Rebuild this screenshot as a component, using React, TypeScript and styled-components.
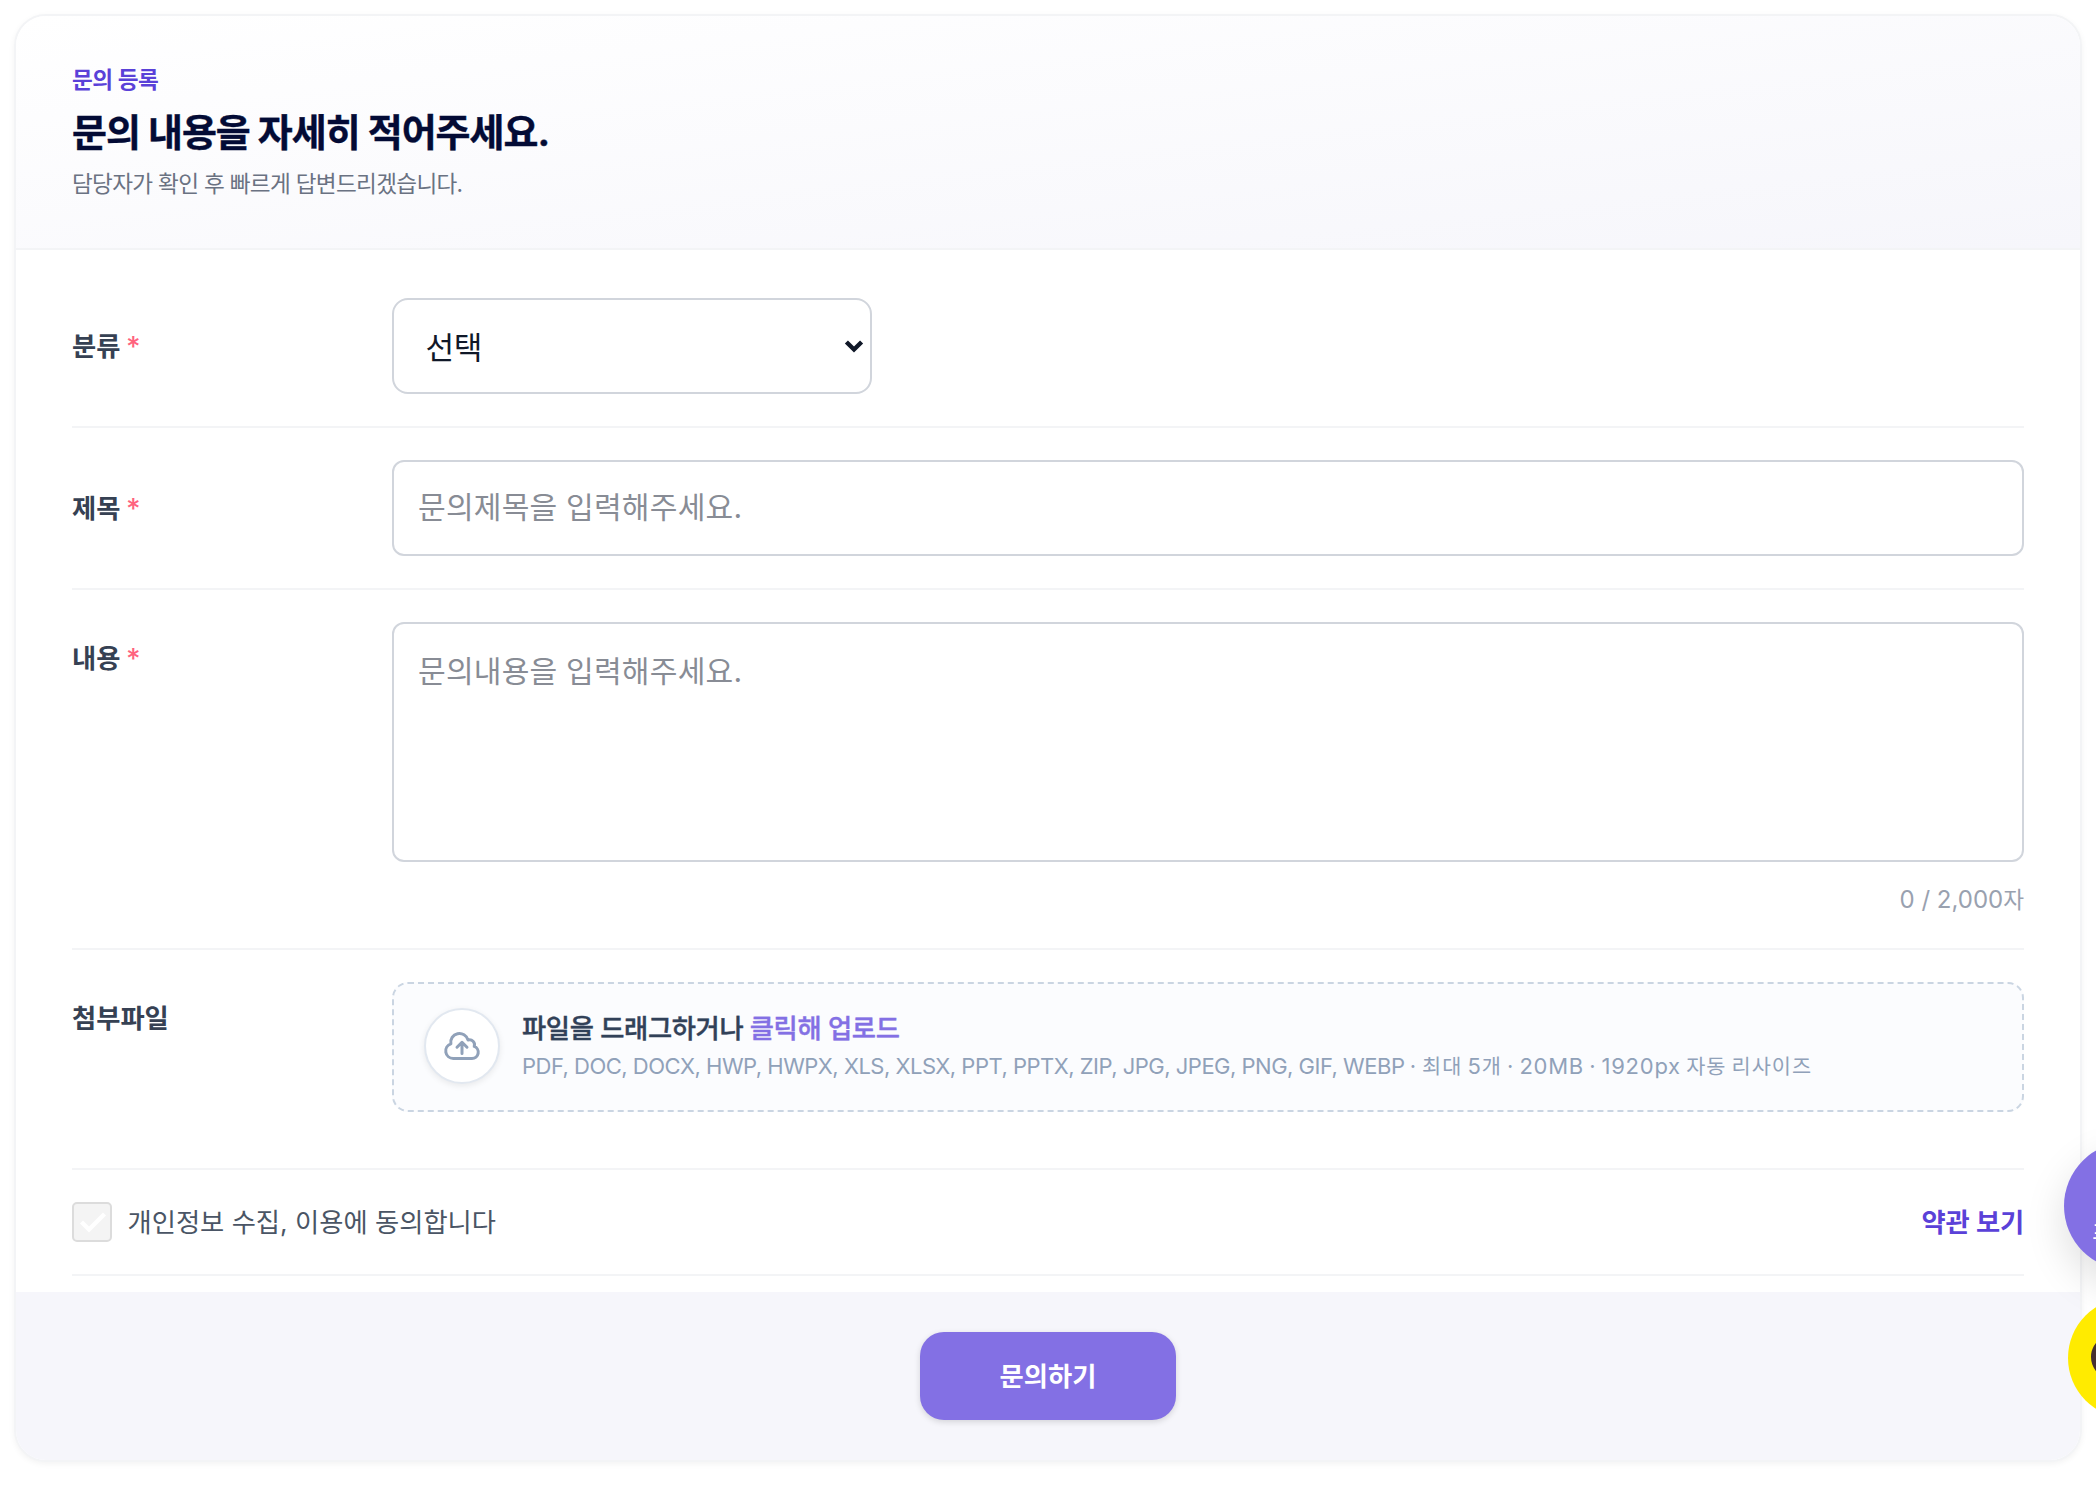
import React, { useState } from 'react';
import styled, { createGlobalStyle } from 'styled-components';

const sans = `Inter, "Noto Sans CJK KR", sans-serif`;

const color = {
  primary: '#8370e4',
  primaryDeep: '#5a41d8',
  heading: '#030b35',
  label: '#364153',
  body: '#4a5565',
  muted: '#6a7282',
  faint: '#99a1af',
  placeholder: '#888c95',
  line: '#f3f4f6',
  field: '#d1d5dc',
  slate: '#90a1b9',
  panel: '#f6f6fb',
};

const GlobalStyle = createGlobalStyle`
  * { box-sizing: border-box; }
  html, body { margin: 0; padding: 0; overflow: hidden; background: #fff; }
  body { font-family: ${sans}; -webkit-font-smoothing: antialiased; }
  button, input, textarea { font-family: inherit; margin: 0; }
`;

const Page = styled.main`
  min-height: 1506px;
  padding: 14px;
`;

const Card = styled.form`
  display: flex;
  flex-direction: column;
  border: 2px solid ${color.line};
  border-radius: 32px;
  background: #fff;
  overflow: hidden;
  box-shadow: 0 2px 6px rgba(0, 0, 0, 0.05);
`;

const Header = styled.header`
  display: flex;
  flex-direction: column;
  gap: 8px;
  height: 234px;
  padding: 48px 56px 0;
  border-bottom: 2px solid ${color.line};
  background: linear-gradient(to bottom right, #fff, ${color.panel});
`;

const Eyebrow = styled.p`
  margin: 0;
  font-size: 22.6px;
  line-height: 32px;
  font-weight: 600;
  letter-spacing: -0.5px;
  color: ${color.primaryDeep};
`;

const Title = styled.h1`
  margin: 0;
  padding-top: 1px;
  font-size: 38px;
  line-height: 55px;
  font-weight: 700;
  letter-spacing: -1px;
  color: ${color.heading};
  -webkit-text-stroke: 0.4px currentColor;
`;

const Lead = styled.p`
  margin: 0;
  font-size: 22.6px;
  line-height: 32px;
  letter-spacing: -0.68px;
  color: ${color.muted};
`;

const Body = styled.div`
  display: flex;
  flex-direction: column;
  padding: 16px 56px;
`;

const Row = styled.div<{ $top?: boolean; $last?: boolean }>`
  display: grid;
  grid-template-columns: 320px 1fr;
  align-items: ${(p) => (p.$top ? 'start' : 'center')};
  padding: 32px 0;
  border-bottom: ${(p) => (p.$last ? 'none' : `2px solid ${color.line}`)};
`;

const Label = styled.label<{ $top?: boolean }>`
  display: flex;
  gap: 5.5px;
  padding-top: ${(p) => (p.$top ? '17px' : '2px')};
  font-size: 26.3px;
  line-height: 40px;
  font-weight: 600;
  color: ${color.label};
`;

const Required = styled.span`
  font-size: 28px;
  font-weight: 500;
  color: #ff637e;
`;

const SelectBox = styled.button`
  display: flex;
  align-items: center;
  justify-content: space-between;
  width: 480px;
  height: 96px;
  padding: 0 6px 0 31.5px;
  border: 2px solid ${color.field};
  border-radius: 16px;
  background: #fff;
  font-size: 31.2px;
  color: #101828;
`;

const SelectValue = styled.span`
  padding-bottom: 2px;
  letter-spacing: -0.4px;
`;

const Input = styled.input`
  width: 100%;
  height: 96px;
  padding: 0 24px 2px;
  border: 2px solid ${color.field};
  border-radius: 12px;
  background: #fff;
  font-size: 30.1px;
  letter-spacing: 0.2px;
  outline: none;
  &::placeholder { color: ${color.placeholder}; opacity: 1; }
`;

const TextArea = styled.textarea`
  display: block;
  width: 100%;
  height: 240px;
  padding: 23px 24px;
  border: 2px solid ${color.field};
  border-radius: 12px;
  background: #fff;
  font-size: 30.1px;
  line-height: 48px;
  letter-spacing: 0.2px;
  resize: none;
  outline: none;
  &::placeholder { color: ${color.placeholder}; opacity: 1; }
`;

const Counter = styled.div`
  margin-top: 22px;
  text-align: right;
  font-size: 24px;
  line-height: 32px;
  color: ${color.faint};
`;

const Unit = styled.span`
  font-size: 22.6px;
`;

const DropZone = styled.div`
  display: flex;
  align-items: flex-start;
  gap: 22px;
  height: 130px;
  padding: 24px 30px;
  border: 2px dashed #cad5e2;
  border-radius: 16px;
  background: #fbfcfe;
`;

const UploadBadge = styled.span`
  display: flex;
  align-items: center;
  justify-content: center;
  flex: none;
  width: 76px;
  height: 76px;
  border: 2px solid #e2e8f0;
  border-radius: 50%;
  background: #fff;
  color: ${color.slate};
  box-shadow: 0 2px 6px rgba(0, 0, 0, 0.08);
`;

const DropText = styled.div`
  display: flex;
  flex-direction: column;
  white-space: nowrap;
`;

const DropTitle = styled.p`
  display: flex;
  gap: 6.500px;
  margin: 0;
  padding-top: 1px;
  font-size: 26.3px;
  line-height: 39px;
  font-weight: 500;
  letter-spacing: -0.35px;
  color: #314158;
  -webkit-text-stroke: 0.4px currentColor;
`;

const Accent = styled.span`
  color: ${color.primary};
`;

const DropHint = styled.p`
  margin: 0;
  font-size: 22px;
  line-height: 36px;
  letter-spacing: 0.75px;
  word-spacing: -1.7px;
  color: ${color.slate};
`;

const Formats = styled.span`
  letter-spacing: -0.5px;
  word-spacing: 0;
`;

const Ko = styled.span`
  font-size: 20.8px;
  letter-spacing: 1px;
`;

const Consent = styled.div`
  display: flex;
  align-items: center;
  justify-content: space-between;
  height: 108px;
  margin-top: 24px;
  border-top: 2px solid ${color.line};
  border-bottom: 2px solid ${color.line};
`;

const ConsentLabel = styled.div`
  display: flex;
  align-items: center;
  gap: 15.5px;
`;

const ConsentText = styled.span`
  padding-top: 2px;
  font-size: 26.3px;
  line-height: 40px;
  color: ${color.body};
`;

const CheckBox = styled.button`
  display: flex;
  align-items: center;
  justify-content: center;
  width: 40px;
  height: 40px;
  padding: 0;
  border: 2px solid #dcdcdc;
  border-radius: 5px;
  background: #f4f4f4;
  color: #fff;
`;

const TermsLink = styled.a`
  padding-top: 2px;
  font-size: 26.3px;
  line-height: 40px;
  font-weight: 600;
  letter-spacing: -0.2px;
  color: ${color.primaryDeep};
`;

const Footer = styled.footer`
  display: flex;
  justify-content: center;
  height: 168px;
  padding: 40px 0;
  background: ${color.panel};
`;

const Submit = styled.button`
  width: 256px;
  height: 88px;
  padding: 0 0 3px;
  border: 0;
  border-radius: 24px;
  background: ${color.primary};
  color: #fff;
  font-size: 26.3px;
  font-weight: 600;
  letter-spacing: 0.1px;
  box-shadow: 0 2px 6px rgba(0, 0, 0, 0.14);
`;

const FloatingMenu = styled.aside`
  position: fixed;
  top: 1142px;
  left: 2064px;
  display: flex;
  flex-direction: column;
  align-items: center;
  gap: 28px;
  width: 128px;
`;

const FloatingButton = styled.button<{ $size: number; $bg: string; $shadow?: boolean }>`
  display: flex;
  align-items: center;
  justify-content: center;
  flex: none;
  width: ${(p) => p.$size}px;
  height: ${(p) => p.$size}px;
  padding: 0;
  border: 0;
  border-radius: 50%;
  background: ${(p) => p.$bg};
  color: #fff;
  box-shadow: ${(p) => (p.$shadow ? '0 16px 40px rgba(0, 0, 0, 0.13)' : 'none')};
`;

const FloatingText = styled.span`
  padding-top: 54px;
  font-size: 20px;
  line-height: 28px;
  font-weight: 500;
  letter-spacing: -0.6px;
  white-space: nowrap;
`;

const ChevronIcon = () => (
  <svg width="20" height="14" viewBox="0 0 20 14" fill="none" stroke="#101828" strokeWidth="4.4">
    <path d="M2.4 3 10 10.5 17.6 3" />
  </svg>
);

const CloudUploadIcon = () => (
  <svg width="40" height="40" viewBox="0 0 24 24" fill="none" stroke="currentColor" strokeWidth="1.8" strokeLinecap="round" strokeLinejoin="round">
    <path d="M12 16.5V9.75m0 0l3 3m-3-3l-3 3M6.75 19.5a4.5 4.5 0 01-1.41-8.775 5.25 5.25 0 0110.233-2.33 3 3 0 013.758 3.848A3.752 3.752 0 0118 19.5H6.75z" />
  </svg>
);

const CheckIcon = () => (
  <svg width="36" height="36" viewBox="0 0 36 36" fill="none" stroke="currentColor" strokeWidth="4.4">
    <path d="M7.500 18 15 25.500 30.500 10" />
  </svg>
);

const TalkIcon = () => (
  <svg width="74" height="74" viewBox="0 0 74 74" fill="#46302f">
    <path d="M37 8C16.6 8 0 20.500 0 36c0 10 6.800 18.700 17 23.700L13.500 72 28 62.900c2.900.5 5.900.7 9 .7 20.400 0 37-12.100 37-27.600S57.400 8 37 8z" />
  </svg>
);

function FieldLabel({ text, required, top }: { text: string; required?: boolean; top?: boolean }) {
  return (
    <Label $top={top}>
      {text}
      {required && <Required>*</Required>}
    </Label>
  );
}

export default function App() {
  const [subject, setSubject] = useState('');
  const [content, setContent] = useState('');

  return (
    <>
      <GlobalStyle />
      <Page>
        <Card onSubmit={(e) => e.preventDefault()}>
          <Header>
            <Eyebrow>문의 등록</Eyebrow>
            <Title>문의 내용을 자세히 적어주세요.</Title>
            <Lead>담당자가 확인 후 빠르게 답변드리겠습니다.</Lead>
          </Header>
          <Body>
            <Row>
              <FieldLabel text="분류" required />
              <SelectBox type="button">
                <SelectValue>선택</SelectValue>
                <ChevronIcon />
              </SelectBox>
            </Row>
            <Row>
              <FieldLabel text="제목" required />
              <Input
                value={subject}
                onChange={(e) => setSubject(e.target.value)}
                placeholder="문의제목을 입력해주세요."
              />
            </Row>
            <Row $top>
              <FieldLabel text="내용" required top />
              <div>
                <TextArea
                  value={content}
                  maxLength={2000}
                  onChange={(e) => setContent(e.target.value)}
                  placeholder="문의내용을 입력해주세요."
                />
                <Counter>
                  {content.length} / 2,000<Unit>자</Unit>
                </Counter>
              </div>
            </Row>
            <Row $top $last>
              <FieldLabel text="첨부파일" top />
              <DropZone>
                <UploadBadge>
                  <CloudUploadIcon />
                </UploadBadge>
                <DropText>
                  <DropTitle>
                    <span>파일을 드래그하거나</span>
                    <Accent>클릭해 업로드</Accent>
                  </DropTitle>
                  <DropHint>
                    <Formats>PDF, DOC, DOCX, HWP, HWPX, XLS, XLSX, PPT, PPTX, ZIP, JPG, JPEG, PNG, GIF, WEBP</Formats>
                    {' · '}
                    <Ko>최대</Ko> 5<Ko>개</Ko> · 20MB · 1920px <Ko>자동 리사이즈</Ko>
                  </DropHint>
                </DropText>
              </DropZone>
            </Row>
            <Consent>
              <ConsentLabel>
                <CheckBox type="button" aria-label="동의">
                  <CheckIcon />
                </CheckBox>
                <ConsentText>개인정보 수집, 이용에 동의합니다</ConsentText>
              </ConsentLabel>
              <TermsLink>약관 보기</TermsLink>
            </Consent>
          </Body>
          <Footer>
            <Submit type="submit">문의하기</Submit>
          </Footer>
        </Card>
      </Page>
      <FloatingMenu>
        <FloatingButton type="button" $size={128} $bg={color.primary} $shadow>
          <FloatingText>프로모션</FloatingText>
        </FloatingButton>
        <FloatingButton type="button" $size={120} $bg="#ffeb00">
          <TalkIcon />
        </FloatingButton>
      </FloatingMenu>
    </>
  );
}
